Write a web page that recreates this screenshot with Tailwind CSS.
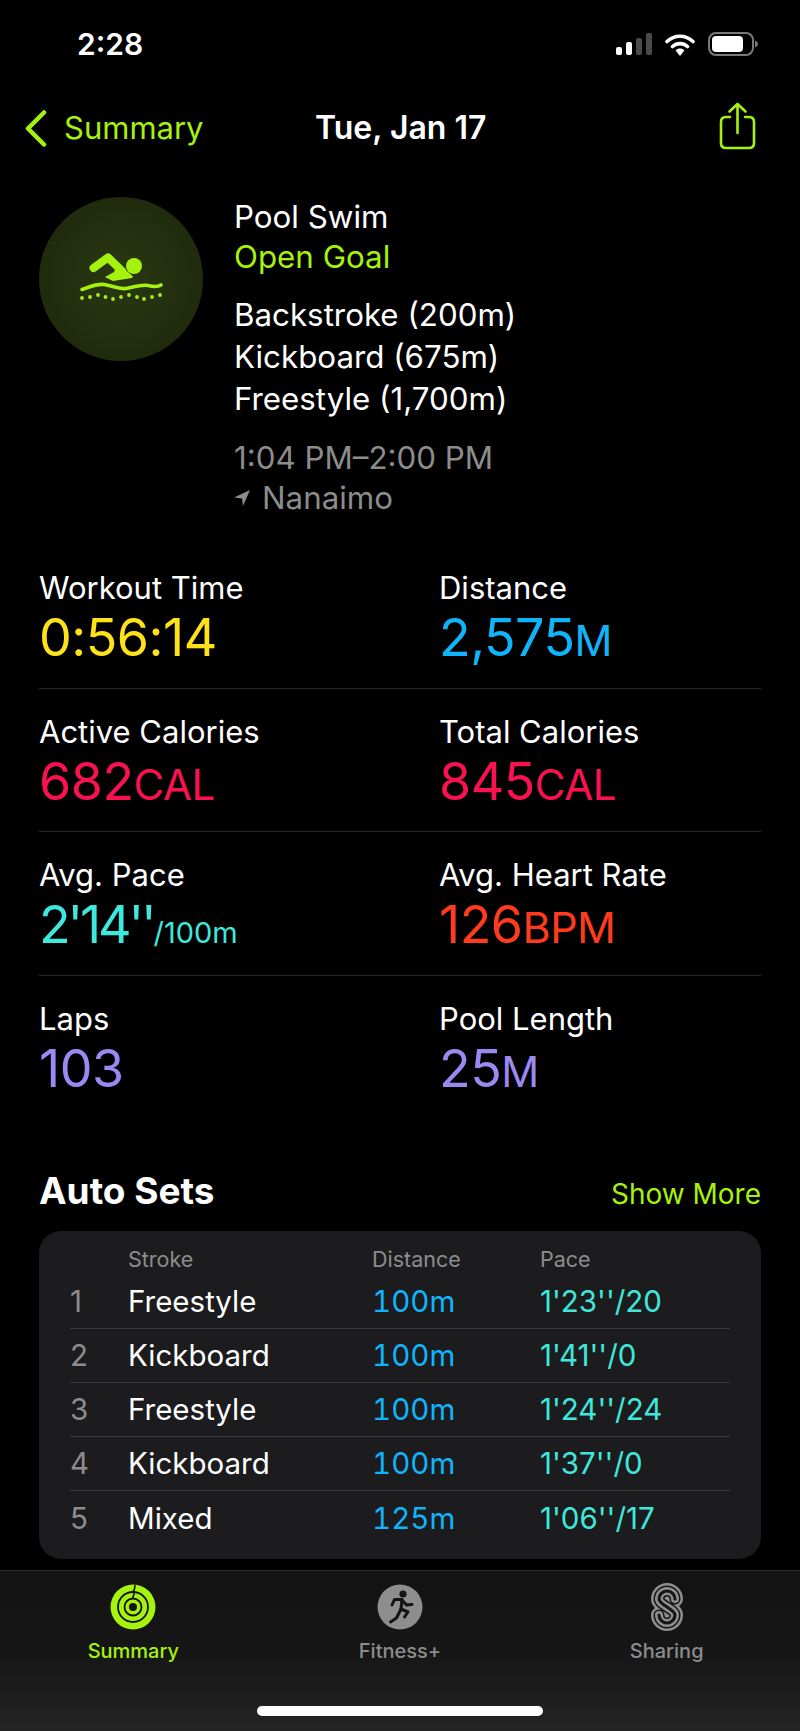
<!DOCTYPE html>
<html lang="en">
<head>
  <meta charset="UTF-8" />
  <meta name="viewport" content="width=device-width, initial-scale=1.0"/>
  <title>Pool Swim</title>
  <script src="https://cdn.jsdelivr.net/npm/@tailwindcss/browser@4"></script>
</head>
<body class="bg-black text-white font-[Inter,sans-serif] w-[800px] h-[1731px] flex flex-col overflow-hidden">

  <!-- Status bar -->
  <div class="h-[88px] flex items-center justify-between pl-[77px] pr-[42px] shrink-0">
    <span class="text-[30px] leading-[36px] font-semibold">2:28</span>
    <div class="flex items-center gap-[13px]">
      <svg width="36" height="22" viewBox="0 0 36 22">
        <rect x="0" y="14" width="6" height="8" rx="2" fill="#fff"/>
        <rect x="10" y="9" width="6" height="13" rx="2" fill="#fff"/>
        <rect x="20" y="5" width="6" height="17" rx="2" fill="#4a4a4a"/>
        <rect x="30" y="0" width="6" height="22" rx="2" fill="#4a4a4a"/>
      </svg>
      <svg width="30" height="23" viewBox="0 0 30 23">
        <path d="M2 8.5C9.5 1.5 20.5 1.5 28 8.5" fill="none" stroke="#fff" stroke-width="3.6" stroke-linecap="round"/>
        <path d="M7.5 13.5C12 9.6 18 9.6 22.5 13.5" fill="none" stroke="#fff" stroke-width="3.6" stroke-linecap="round"/>
        <path d="M10.6 17.4C13.2 15 16.8 15 19.4 17.4L15 23Z" fill="#fff"/>
      </svg>
      <svg width="50" height="24" viewBox="0 0 50 24">
        <rect x="1" y="1" width="44" height="22" rx="7" fill="none" stroke="#7a7a7a" stroke-width="2"/>
        <rect x="4" y="4" width="31" height="16" rx="4" fill="#fff"/>
        <path d="M47 8.5C49 9.5 50 10.5 50 12C50 13.5 49 14.5 47 15.5Z" fill="#7a7a7a"/>
      </svg>
    </div>
  </div>

  <!-- Nav -->
  <div class="h-[80px] shrink-0 relative flex items-center pl-[24px] pr-[44px] justify-between">
    <div class="flex items-center gap-[17px] text-[#a6f20f]">
      <svg width="23" height="37" viewBox="0 0 23 37"><path d="M20 2.5L4 18.5L20 34.5" fill="none" stroke="currentColor" stroke-width="4.5" stroke-linecap="round" stroke-linejoin="round"/></svg>
      <span class="text-[31px] leading-[40px]">Summary</span>
    </div>
    <span class="absolute left-[315px] top-[20px] text-[32px] leading-[40px] font-semibold">Tue, Jan 17</span>
    <svg class="-mt-[4px]" width="37" height="48" viewBox="0 0 37 48" fill="none" stroke="#a6f20f" stroke-width="2.6" stroke-linecap="round" stroke-linejoin="round">
      <path d="M11 15H7Q2 15 2 20V41Q2 46 7 46H30Q35 46 35 41V20Q35 15 30 15H26"/>
      <path d="M18.5 31V2M10.5 9.5L18.5 2L26.5 9.5"/>
    </svg>
  </div>

  <!-- Workout header -->
  <div class="shrink-0 flex pl-[39px] pt-[29px] h-[377px]">
    <div class="w-[164px] h-[164px] rounded-full bg-radial from-[#2a3812] to-[#1c260c] flex items-center justify-center shrink-0">
      <svg width="130" height="70" viewBox="56 244 130 70">
        <circle cx="134" cy="266" r="8" fill="#a6f20f"/>
        <path d="M93.500 268L108 257.500L122 271" fill="none" stroke="#a6f20f" stroke-width="8" stroke-linecap="round" stroke-linejoin="round"/>
        <path d="M118 263L133 276.500L132 278L113 281L105 277L114 272Z" fill="#a6f20f"/>
        <path d="M82 289.500C90 287 96 283.500 104 284.500C112 285.500 118 289.500 126 288.500C134 287.500 140 284 148 285.500C154 287 158 287 161 285" fill="none" stroke="#a6f20f" stroke-width="3.600" stroke-linecap="round"/>
        <g fill="#a6f20f">
          <circle cx="82" cy="298" r="1.900"/><circle cx="90" cy="297" r="1.900"/><circle cx="98" cy="295" r="1.900"/><circle cx="105.500" cy="297" r="1.900"/><circle cx="113" cy="299" r="1.900"/><circle cx="121" cy="297" r="1.900"/><circle cx="129" cy="295" r="1.900"/><circle cx="137" cy="297" r="1.900"/><circle cx="144" cy="299" r="1.900"/><circle cx="152" cy="297" r="1.900"/><circle cx="160" cy="295" r="1.900"/>
        </g>
      </svg>
    </div>
    <div class="ml-[31px] text-[31.300px]">
      <div class="leading-[40px]">Pool Swim</div>
      <div class="leading-[40px] text-[#a6f20f]">Open Goal</div>
      <div class="mt-[17px] leading-[42px]">Backstroke (200m)</div>
      <div class="leading-[42px]">Kickboard (675m)</div>
      <div class="leading-[42px]">Freestyle (1,700m)</div>
      <div class="mt-[18px] leading-[40px] text-[#8c8c8c]">1:04 PM–2:00 PM</div>
      <div class="leading-[40px] text-[#8c8c8c] flex items-center gap-[12px]">
        <svg width="16" height="16" viewBox="0 0 16 16"><path d="M16 0L0 7.500L8 8.500L9 16Z" fill="#8c8c8c"/></svg>
        <span>Nanaimo</span>
      </div>
    </div>
  </div>

  <!-- Stats -->
  <div class="shrink-0 mx-[39px]">
    <div class="h-[143.500px] pt-[23px] border-b border-[#262626] grid grid-cols-[400px_1fr]">
      <div>
        <div class="text-[31px] leading-[40px]">Workout Time</div>
        <div class="text-[52px] leading-[60px] tracking-[-0.01em] text-[#ffe11a]">0:56:14</div>
      </div>
      <div>
        <div class="text-[31px] leading-[40px]">Distance</div>
        <div class="text-[52px] leading-[60px] tracking-[-0.01em] text-[#0fb5fb]">2,575<span class="text-[42px]">M</span></div>
      </div>
    </div>
    <div class="h-[143.500px] pt-[23px] border-b border-[#262626] grid grid-cols-[400px_1fr]">
      <div>
        <div class="text-[31px] leading-[40px]">Active Calories</div>
        <div class="text-[52px] leading-[60px] tracking-[-0.01em] text-[#fa1150]">682<span class="text-[42px]">CAL</span></div>
      </div>
      <div>
        <div class="text-[31px] leading-[40px]">Total Calories</div>
        <div class="text-[52px] leading-[60px] tracking-[-0.01em] text-[#fa1150]">845<span class="text-[42px]">CAL</span></div>
      </div>
    </div>
    <div class="h-[143.500px] pt-[23px] border-b border-[#262626] grid grid-cols-[400px_1fr]">
      <div>
        <div class="text-[31px] leading-[40px]">Avg. Pace</div>
        <div class="text-[52px] leading-[60px] text-[#3ee8dc]"><span class="tracking-[-0.06em]">2'14''</span><span class="text-[29px]">/100m</span></div>
      </div>
      <div>
        <div class="text-[31px] leading-[40px]">Avg. Heart Rate</div>
        <div class="text-[52px] leading-[60px] tracking-[-0.01em] text-[#ff3b1e]">126<span class="text-[43px]">BPM</span></div>
      </div>
    </div>
    <div class="h-[143.500px] pt-[23px] grid grid-cols-[400px_1fr]">
      <div>
        <div class="text-[31px] leading-[40px]">Laps</div>
        <div class="text-[52px] leading-[60px] tracking-[-0.01em] text-[#9b88f0]">103</div>
      </div>
      <div>
        <div class="text-[31px] leading-[40px]">Pool Length</div>
        <div class="text-[52px] leading-[60px] tracking-[-0.01em] text-[#9b88f0]">25<span class="text-[42px]">M</span></div>
      </div>
    </div>
  </div>

  <!-- Auto Sets -->
  <div class="shrink-0 mx-[39px] mt-[52px] flex justify-between h-[40px]">
    <span class="text-[37px] leading-[40px] font-bold">Auto Sets</span>
    <span class="mt-[3px] text-[28px] leading-[40px] text-[#a6f20f]">Show More</span>
  </div>
  <div class="shrink-0 mx-[39px] mt-[20px] h-[328px] rounded-[22px] bg-[#1c1c1e] px-[31px] pt-[12px]">
    <div class="grid grid-cols-[58px_244px_168px_1fr] text-[21.500px] leading-[32px] text-[#8c8c8c]">
      <span></span><span>Stroke</span><span>Distance</span><span>Pace</span>
    </div>
    <div class="text-[29.500px]">
      <div class="grid grid-cols-[58px_244px_168px_1fr] h-[54px] items-center border-b border-[#3a3a3c]">
        <span class="text-[#8c8c8c]">1</span><span>Freestyle</span><span class="text-[#0fb5fb] tabular-nums">100m</span><span class="text-[#3ee8dc]">1'23''/20</span>
      </div>
      <div class="grid grid-cols-[58px_244px_168px_1fr] h-[54px] items-center border-b border-[#3a3a3c]">
        <span class="text-[#8c8c8c]">2</span><span>Kickboard</span><span class="text-[#0fb5fb] tabular-nums">100m</span><span class="text-[#3ee8dc]">1'41''/0</span>
      </div>
      <div class="grid grid-cols-[58px_244px_168px_1fr] h-[54px] items-center border-b border-[#3a3a3c]">
        <span class="text-[#8c8c8c]">3</span><span>Freestyle</span><span class="text-[#0fb5fb] tabular-nums">100m</span><span class="text-[#3ee8dc]">1'24''/24</span>
      </div>
      <div class="grid grid-cols-[58px_244px_168px_1fr] h-[54px] items-center border-b border-[#3a3a3c]">
        <span class="text-[#8c8c8c]">4</span><span>Kickboard</span><span class="text-[#0fb5fb] tabular-nums">100m</span><span class="text-[#3ee8dc]">1'37''/0</span>
      </div>
      <div class="grid grid-cols-[58px_244px_168px_1fr] h-[54px] items-center">
        <span class="text-[#8c8c8c]">5</span><span>Mixed</span><span class="text-[#0fb5fb] tabular-nums">125m</span><span class="text-[#3ee8dc]">1'06''/17</span>
      </div>
    </div>
  </div>

  <!-- Tab bar -->
  <div class="mt-[11px] flex-1 border-t border-[#2c2c2c] bg-linear-to-b from-[#131313] via-[#161616] to-[#242424] pt-[11px]">
    <div class="grid grid-cols-3 text-center text-[20px] leading-[24px] font-medium">
      <div class="flex flex-col items-center text-[#a6f20f]">
        <svg width="46" height="50" viewBox="0 0 46 50">
          <circle cx="23" cy="25" r="22.500" fill="#a6f20f"/>
          <circle cx="23" cy="25" r="15" fill="none" stroke="#141414" stroke-width="1.800"/>
          <circle cx="23" cy="25" r="8.500" fill="none" stroke="#141414" stroke-width="1.800"/>
          <circle cx="23" cy="25" r="4" fill="#141414"/>
          <path d="M25 3L24.500 7L23.500 9L24 12L22.500 16.500" fill="none" stroke="#141414" stroke-width="1.600"/>
        </svg>
        <span class="mt-[7px]">Summary</span>
      </div>
      <div class="flex flex-col items-center text-[#8c8c8c]">
        <svg width="46" height="50" viewBox="0 0 46 50">
          <circle cx="23" cy="25" r="22.500" fill="#8e8e8e"/>
          <circle cx="26" cy="12" r="3.600" fill="#141414"/>
          <g fill="none" stroke="#141414" stroke-width="3" stroke-linecap="round" stroke-linejoin="round">
            <path d="M15 23L17.500 17.500L25 17.500L24 27L19.500 36L13.500 40"/>
            <path d="M25 18L29.500 23L35 22.500"/>
            <path d="M24 27L31 30L27.500 35"/>
          </g>
        </svg>
        <span class="mt-[7px]">Fitness+</span>
      </div>
      <div class="flex flex-col items-center text-[#8c8c8c]">
        <svg width="34" height="50" viewBox="0 0 34 50" fill="none" stroke-linecap="round">
          <path d="M25 17A8 8 0 0 0 9 17C9 23 25 27 25 33A8 8 0 0 1 9 33" stroke="#8e8e8e" stroke-width="16"/>
          <path d="M25 17A8 8 0 0 0 9 17C9 23 25 27 25 33A8 8 0 0 1 9 33" stroke="#151515" stroke-width="11"/>
          <path d="M25 17A8 8 0 0 0 9 17C9 23 25 27 25 33A8 8 0 0 1 9 33" stroke="#8e8e8e" stroke-width="8"/>
          <path d="M25 17A8 8 0 0 0 9 17C9 23 25 27 25 33A8 8 0 0 1 9 33" stroke="#151515" stroke-width="3"/>
        </svg>
        <span class="mt-[7px]">Sharing</span>
      </div>
    </div>
    <div class="mt-[43px] mx-auto w-[286px] h-[10px] rounded-full bg-white"></div>
  </div>

</body>
</html>
